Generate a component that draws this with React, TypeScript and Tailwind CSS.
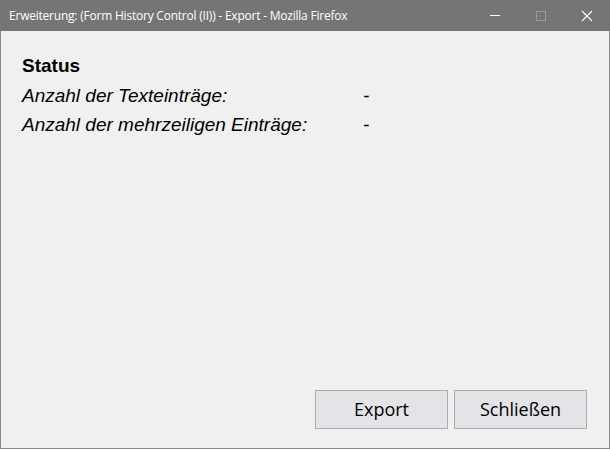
export default function App() {
  return (
    <div className="flex h-[449px] w-[610px] flex-col bg-[#f0f0f0]">
      <div className="flex h-[31px] shrink-0 items-center bg-[#757575] pl-[9px] text-white">
        <span className="flex-1 text-[12px] font-['Open_Sans',sans-serif] tracking-[-0.22px]">
          Erweiterung: (Form History Control (II)) - Export - Mozilla Firefox
        </span>
        <div className="flex h-full items-center">
          <div className="flex h-full w-[46px] items-center justify-center">
            <span className="h-px w-[10px] bg-white" />
          </div>
          <div className="flex h-full w-[46px] items-center justify-center">
            <span className="h-[10px] w-[10px] border border-[#9a9a9a]" />
          </div>
          <div className="flex h-full w-[46px] items-center justify-center">
            <svg width="12" height="12" viewBox="0 0 12 12">
              <path d="M1 1L11 11M11 1L1 11" stroke="white" strokeWidth="1.1" />
            </svg>
          </div>
        </div>
      </div>
      <div className="flex flex-1 flex-col border-x border-b border-[#8a8a8a] font-['Liberation_Sans',Arial,sans-serif] text-black">
        <div className="flex flex-col pl-[21px] pt-[20px] text-[19px] leading-[29.5px]">
          <div className="font-bold">Status</div>
          <div className="flex italic">
            <span className="w-[341px]">Anzahl der Texteinträge:</span>
            <span>-</span>
          </div>
          <div className="flex italic">
            <span className="w-[341px]">Anzahl der mehrzeiligen Einträge:</span>
            <span>-</span>
          </div>
        </div>
        <div className="mt-auto flex justify-end gap-[6px] pb-[19px] pr-[22px]">
          <button className="h-[39px] w-[133px] border border-[#adadad] bg-[#e3e3e8] text-[18px] font-['Open_Sans',sans-serif] text-black">
            Export
          </button>
          <button className="h-[39px] w-[133px] border border-[#adadad] bg-[#e3e3e8] text-[18px] font-['Open_Sans',sans-serif] text-black">
            Schließen
          </button>
        </div>
      </div>
    </div>
  );
}
